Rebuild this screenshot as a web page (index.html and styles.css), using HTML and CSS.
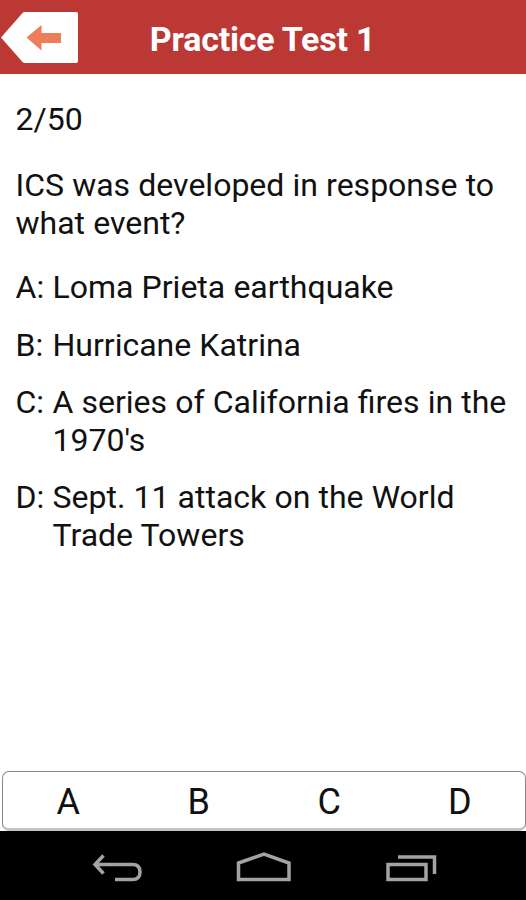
FILE: index.html
```html
<!DOCTYPE html>
<html lang="en">
<head>
<meta charset="utf-8">
<title>Practice Test 1</title>
<link rel="stylesheet" href="styles.css">
</head>
<body>
<div class="screen">
  <header class="bar">
    <svg class="back" width="80" height="74" viewBox="0 0 80 74" aria-hidden="true">
      <path d="M1 37.5 22.5 13Q23.5 12 25 12H76Q78 12 78 14V61Q78 63 76 63H25Q23.500 63 22.500 62Z" fill="#fff"/>
      <path d="M26.500 37.500 41.500 25V33H61V43H41.500V50.500Z" fill="#ef7d59"/>
    </svg>
    <h1 class="title">Practice Test 1</h1>
  </header>
  <main class="content">
    <p class="count">2/50</p>
    <p class="question">ICS was developed in response to<br>what event?</p>
    <ul class="options">
      <li><span>A:</span><span>Loma Prieta earthquake</span></li>
      <li><span>B:</span><span>Hurricane Katrina</span></li>
      <li><span>C:</span><span>A series of California fires in the<br>1970's</span></li>
      <li><span>D:</span><span>Sept. 11 attack on the World<br>Trade Towers</span></li>
    </ul>
  </main>
  <div class="answers"><span>A</span><span>B</span><span>C</span><span>D</span></div>
  <nav class="nav">
    <svg width="526" height="69" viewBox="0 0 526 69" fill="none" stroke="#a3a3a3" stroke-width="3.500" aria-hidden="true">
      <path d="M103.500 24.500 95 33.500 103.500 42.500M96 33.500H132.500Q140 33.500 140 41T132.500 48.500H115"/>
      <path d="M238.500 32 264 23 289 32V48.500H238.500Z"/>
      <path d="M388 33.500H426V48.500H388ZM398 26H434.500V43"/>
    </svg>
  </nav>
</div>
</body>
</html>
```

FILE: styles.css
```css
* { box-sizing: border-box; margin: 0; padding: 0; }
body { background: #fff; font-family: Roboto, sans-serif; color: #111; }
.screen { width: 526px; height: 900px; display: flex; flex-direction: column; }
.bar { height: 74px; background: #bb3835; display: flex; }
.title { width: 365px; padding-top: 3px; text-align: center; font-size: 34px; font-weight: 700; letter-spacing: -0.22px; line-height: 72px; color: #fff; }
.content { flex: 1; padding: 27px 0 0 15.5px; font-size: 32px; line-height: 37.5px; word-spacing: 0.2px; white-space: nowrap; }
.question { margin: 28.5px 0 27px; }
.options { list-style: none; display: flex; flex-direction: column; gap: 20px; }
.options li { display: grid; grid-template-columns: 37px 1fr; }
.answers { height: 60px; margin: 0 0 0 2px; border: 1px solid #888; border-bottom: 3px solid #c4c4c4; border-radius: 7px; display: grid; grid-template-columns: repeat(4, 1fr); text-align: center; font-size: 36px; line-height: 60px; }
.nav { height: 69px; background: #000; }
```
